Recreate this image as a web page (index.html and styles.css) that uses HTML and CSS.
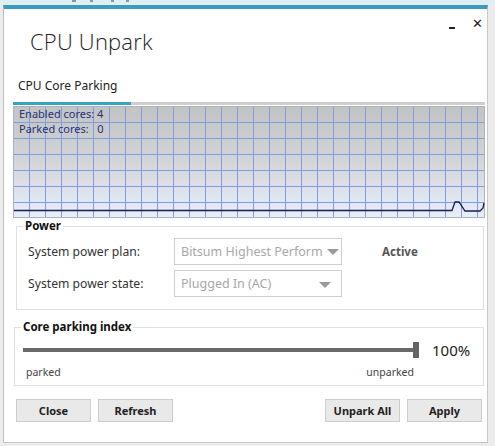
FILE: index.html
```html
<!DOCTYPE html>
<html>
<head>
<meta charset="utf-8">
<link rel="stylesheet" href="styles.css">
</head>
<body>
<div class="backdrop"><i class="bd-mark m1"></i><i class="bd-mark m2"></i><i class="bd-mark m3"></i><i class="bd-mark m4"></i></div>
<div class="window">
  <div class="titlebar">
    <h1 class="title">CPU Unpark</h1>
    <div class="controls"><span class="min"></span><span class="close">✕</span></div>
  </div>
  <div class="tab">CPU Core Parking</div>
  <div class="tabline"><div class="tabline-active"></div></div>
  <div class="graph">
    <div class="graph-info">
      <div>Enabled cores: 4</div>
      <div>Parked cores:&nbsp;&nbsp; 0</div>
    </div>
    <svg class="graph-line" width="471" height="110" viewBox="0 0 471 110">
      <polyline points="0,103.5 438,103.5 441,95 445,95 451,104 466,104 469,101 470,96" fill="none" stroke="#1a2050" stroke-width="1.3"/>
    </svg>
  </div>
  <fieldset class="group power">
    <legend>Power</legend>
    <div class="group-body">
      <div class="row">
        <span class="label">System power plan:</span>
        <div class="select"><span>Bitsum Highest Perform</span><i class="arrow arrow-over"></i></div>
        <span class="status">Active</span>
      </div>
      <div class="row">
        <span class="label">System power state:</span>
        <div class="select"><span>Plugged In (AC)</span><i class="arrow"></i></div>
      </div>
    </div>
  </fieldset>
  <fieldset class="group index">
    <legend>Core parking index</legend>
    <div class="group-body index-body">
      <div class="slider-row">
        <div class="slider"><div class="track"></div><div class="thumb"></div></div>
        <span class="pct">100%</span>
      </div>
      <div class="ticks"><span>parked</span><span>unparked</span></div>
    </div>
  </fieldset>
  <div class="buttons">
    <div class="btn-group">
      <button class="btn">Close</button>
      <button class="btn">Refresh</button>
    </div>
    <div class="btn-group">
      <button class="btn">Unpark All</button>
      <button class="btn">Apply</button>
    </div>
  </div>
</div>
</body>
</html>
```
FILE: styles.css
```css
* { box-sizing: border-box; }
html, body { margin: 0; padding: 0; }
body {
  width: 495px;
  height: 446px;
  overflow: hidden;
  background: #ececec;
  font-family: "Noto Sans", "Open Sans", sans-serif;
  color: #222;
}
.backdrop {
  height: 5px;
  background: #dfeef3;
  display: flex;
}
.bd-mark {
  display: block;
  height: 2px;
  background: #8a97a0;
}
.m1 { width: 4px; margin-left: 72px; }
.m2 { width: 3px; margin-left: 14px; }
.m3 { width: 3px; margin-left: 18px; }
.m4 { width: 3px; margin-left: 12px; }
.window {
  margin-left: 3px;
  width: 485px;
  height: 438px;
  background: #fff;
  border-top: 4px solid #3b9bbd;
  border-left: 1px solid #bdbdbd;
  border-right: 1px solid #c9c9c9;
  border-bottom: 1px solid #c4c4c4;
  padding: 0 0 0 9px;
}
.titlebar {
  display: flex;
  justify-content: space-between;
  align-items: flex-start;
  height: 65px;
}
.title {
  margin: 17px 0 0 17px;
  font-family: "Open Sans", sans-serif;
  font-weight: 300;
  font-size: 22px;
  line-height: 30px;
  color: #1e1e1e;
  letter-spacing: 0.2px;
}
.controls {
  display: flex;
  align-items: flex-start;
  gap: 17px;
  margin: 6px 4px 0 0;
}
.min {
  width: 6px;
  height: 2px;
  background: #222;
  margin-top: 12px;
}
.close {
  font-size: 13px;
  line-height: 16px;
  color: #222;
}
.tab {
  font-size: 12px;
  line-height: 16px;
  margin-left: 5px;
  color: #222;
  height: 28px;
  padding-top: 4px;
}
.tabline {
  width: 472px;
  height: 3px;
  background: #cfcfcf;
}
.tabline-active {
  width: 118px;
  height: 3px;
  background: #3ba3bf;
}
.graph {
  position: relative;
  width: 472px;
  height: 112px;
  margin-top: 1px;
  border: 1px solid #a9b3c4;
  background:
    repeating-linear-gradient(to right, transparent 0 15px, #7f9de2 15px 16px),
    repeating-linear-gradient(to bottom, transparent 0 15px, #7f9de2 15px 16px),
    linear-gradient(to bottom, #c3c3c3 0%, #d2d3d6 45%, #e8edf9 100%);
}
.graph-info {
  position: absolute;
  left: 5px;
  top: -1px;
  font-size: 11px;
  line-height: 15px;
  color: #23327a;
}
.graph-line {
  position: absolute;
  left: 0;
  top: 0;
}
.group {
  margin: 0;
  border: 1px solid #e0e0e0;
  padding: 0;
}
.group legend {
  font-size: 11.5px;
  font-weight: 700;
  color: #111;
  padding: 0 2px;
  margin-left: 6px;
  line-height: 14px;
}
.power {
  width: 468px;
  margin: 1px 0 0 3px;
  height: 91px;
}
.group-body {
  padding: 2px 0 0 11px;
}
.row {
  display: flex;
  align-items: center;
  height: 32px;
}
.label {
  width: 146px;
  font-size: 12.2px;
  color: #333;
}
.select {
  position: relative;
  width: 168px;
  height: 27px;
  border: 1px solid #cfcfcf;
  padding: 0 0 0 6px;
  font-size: 12.5px;
  line-height: 25px;
  color: #a8a8a8;
  white-space: nowrap;
  overflow: hidden;
}
.arrow {
  position: absolute;
  right: 10px;
  top: 11px;
  width: 0;
  height: 0;
  border-left: 6px solid transparent;
  border-right: 6px solid transparent;
  border-top: 6px solid #9a9a9a;
}
.arrow-over { right: 2px; top: 10px; }
.status {
  margin-left: 40px;
  font-size: 11.5px;
  font-weight: 700;
  color: #555;
}
.index {
  width: 470px;
  margin: 10px 0 0 1px;
  height: 66px;
}
.index-body {
  padding: 0 0 0 8px;
}
.slider-row {
  display: flex;
  align-items: center;
  height: 26px;
  margin-top: 3px;
}
.slider {
  position: relative;
  width: 396px;
  height: 16px;
  display: flex;
  align-items: center;
}
.track {
  width: 392px;
  height: 4px;
  background: #6a6a6a;
}
.thumb {
  position: absolute;
  right: 0;
  top: 0;
  width: 6px;
  height: 16px;
  background: #636363;
}
.pct {
  margin-left: 13px;
  font-size: 15px;
  color: #222;
}
.ticks {
  display: flex;
  justify-content: space-between;
  width: 391px;
  padding-left: 3px;
  font-size: 10.5px;
  color: #444;
  margin-top: 2px;
}
.buttons {
  display: flex;
  justify-content: space-between;
  width: 466px;
  margin: 13px 0 0 3px;
}
.btn-group {
  display: flex;
  gap: 7px;
}
.btn {
  width: 75px;
  height: 23px;
  background: #e9e9e9;
  border: 1px solid #cdcdcd;
  font-family: "Noto Sans", sans-serif;
  font-size: 11px;
  font-weight: 700;
  color: #222;
  padding: 0;
}
```
